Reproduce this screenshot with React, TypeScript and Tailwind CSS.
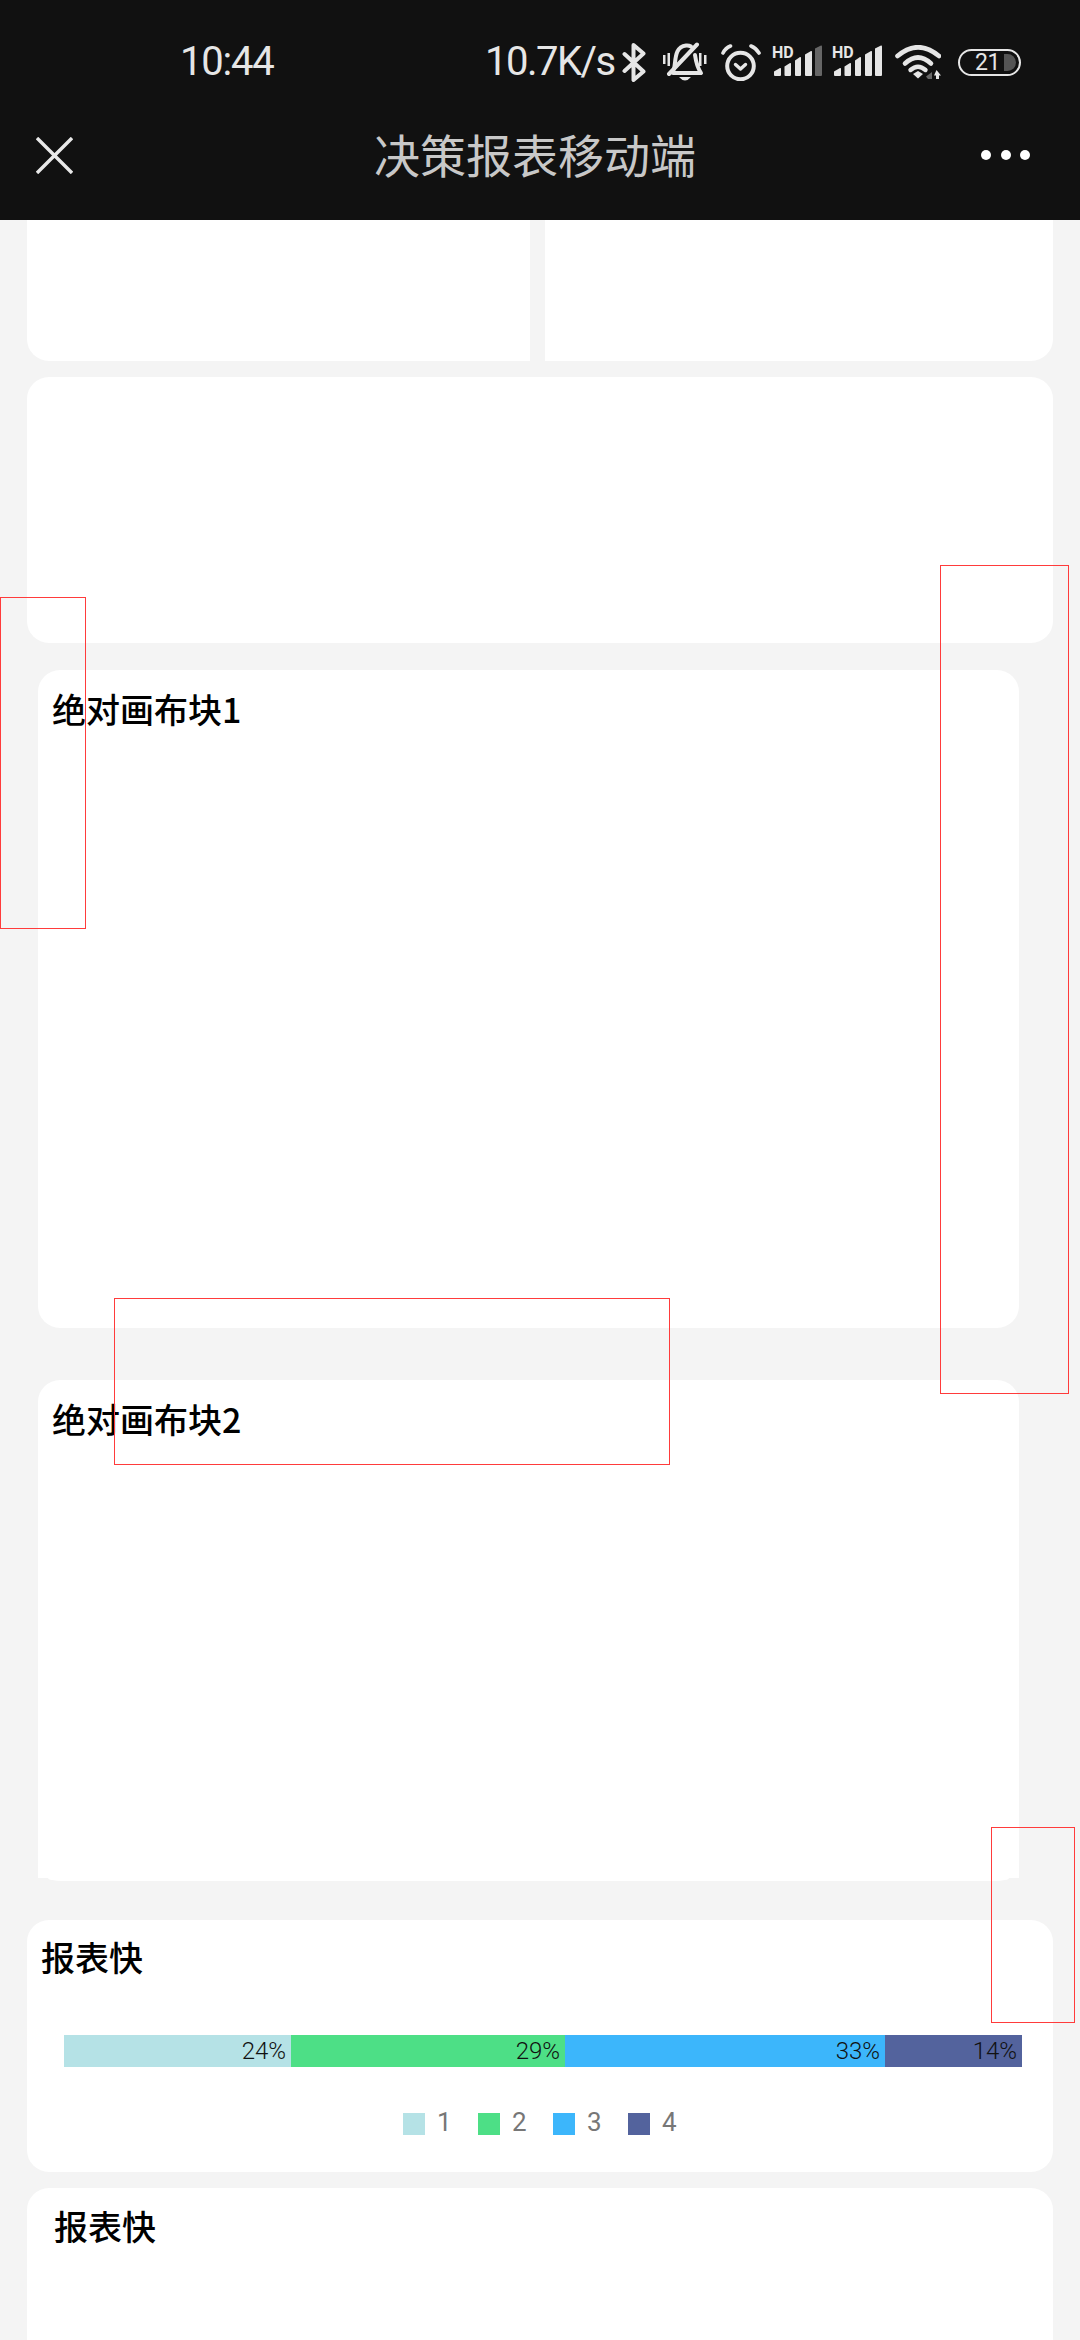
const SEGMENTS = [
  { label: '24%', cls: 'w-[227px] bg-[#b5e2e6]' },
  { label: '29%', cls: 'w-[274px] bg-[#4ddf86]' },
  { label: '33%', cls: 'w-[320px] bg-[#3cb6fb]' },
  { label: '14%', cls: 'w-[137px] bg-[#53639d]' },
];

const LEGEND = [
  { label: '1', cls: 'bg-[#b5e2e6]' },
  { label: '2', cls: 'bg-[#4ddf86]' },
  { label: '3', cls: 'bg-[#3cb6fb]' },
  { label: '4', cls: 'bg-[#53639d]' },
];

function Bluetooth() {
  return (
    <svg width="24" height="39" viewBox="0 0 24 39" fill="none" stroke="#e6e6e6" strokeWidth="4" strokeLinejoin="round" strokeLinecap="round">
      <path d="M2.5 11 L21.5 28.5 L11.5 37 V2 L21.5 10.5 L2.5 28" />
    </svg>
  );
}

function BellMuted() {
  return (
    <svg width="46" height="40" viewBox="0 0 46 40" fill="#e6e6e6" stroke="none">
      <rect x="1" y="13" width="2.5" height="9" />
      <rect x="5.5" y="11" width="2.5" height="13" />
      <rect x="37" y="11" width="2.5" height="13" />
      <rect x="42" y="13" width="2.5" height="9" />
      <g fill="none" stroke="#e6e6e6" strokeWidth="4" strokeLinecap="round" strokeLinejoin="round">
        <path d="M12 27 C14 19 12 5 24 3.5 C26 3.3 27.5 3.6 29 4.5" />
        <path d="M33 13 C34 20 35 25 39 31 H11" />
        <path d="M7 32 L35 2.5" />
      </g>
      <path d="M17 35 H29 Q26 38.5 23 38.5 Q20 38.5 17 35 Z" />
    </svg>
  );
}

function Alarm() {
  return (
    <svg width="40" height="37" viewBox="0 0 40 37" fill="none" stroke="#e6e6e6" strokeLinecap="round" strokeLinejoin="round">
      <circle cx="19.5" cy="22" r="13.3" strokeWidth="4" />
      <path d="M14.5 20.5 L19.5 25 L24.5 20.5" strokeWidth="3.4" />
      <path d="M2 9 Q4.5 4 9.5 2" strokeWidth="3.6" />
      <path d="M30 2 Q35 4 38 9" strokeWidth="3.6" />
    </svg>
  );
}

function Signal({ weak }: { weak?: boolean }) {
  return (
    <svg width="50" height="36" viewBox="0 0 50 36">
      <text x="0" y="14" fontFamily="Roboto, sans-serif" fontWeight="700" fontSize="16" fill="#e6e6e6">HD</text>
      <g fill="#e6e6e6">
        <path d="M2 27.5 L8 24 Q9 23.6 9 25 V31 Q9 32 8 32 H3 Q2 32 2 31 Z" />
        <path d="M12.5 22.5 L18 19 Q19 18.6 19 20 V31 Q19 32 18 32 H13.5 Q12.5 32 12.5 31 Z" />
        <path d="M23 16.5 L28 13 Q29 12.6 29 14 V31 Q29 32 28 32 H24 Q23 32 23 31 Z" />
        <path d="M33 10.5 L39 7 Q40 6.6 40 8 V31 Q40 32 39 32 H34 Q33 32 33 31 Z" />
        <path fill={weak ? '#666666' : '#e6e6e6'} d="M43 4.5 L49 1.5 Q50 1.2 50 2.5 V31 Q50 32 49 32 H44 Q43 32 43 31 Z" />
      </g>
    </svg>
  );
}

function Wifi() {
  return (
    <svg width="46" height="35" viewBox="0 0 46 35" fill="none">
      <g stroke="#e6e6e6" strokeWidth="4.6" strokeLinecap="round">
        <path d="M2.5 11 Q23 -6.5 44 11" />
        <path d="M10 18.5 Q23 6.5 36 18.5" />
      </g>
      <path d="M15.5 25 Q23 18.5 30.5 25" stroke="#e6e6e6" strokeWidth="4.4" strokeLinecap="round" />
      <path d="M18 29 L23 26 L28 29 L23 33.5 Z" fill="#e6e6e6" />
      <path d="M37 27 V34 H33 L31 31.5 Z" fill="#666666" />
      <path d="M41.5 25 L46 30.5 H44 V34 H41 V30.5 H39 Z" fill="#e6e6e6" />
    </svg>
  );
}

function Battery() {
  return (
    <div className="flex items-center w-[63px] h-[27px] rounded-full border-[2.5px] border-[#e6e6e6]">
      <span className="ml-[15px] w-[24px] text-[23px] leading-none text-[#e6e6e6] tracking-[-0.5px]">21</span>
      <div className="ml-[5px] w-[12px] h-[17px] bg-[#555555] rounded-r-full" />
    </div>
  );
}

function CardTitle({ children }: { children: React.ReactNode }) {
  return <div className="text-[34px] leading-none font-medium text-black">{children}</div>;
}

export default function App() {
  return (
    <div className="relative w-[1080px] h-[2340px] overflow-hidden flex flex-col bg-[#f4f4f4] font-['Noto_Sans_CJK_SC',sans-serif]">
      {/* Barra de estado + navegación */}
      <div className="h-[220px] shrink-0 bg-[#111111]">
        <div className="flex items-center h-[124px] pl-[180px] font-['Roboto',sans-serif] text-[#e6e6e6]">
          <span className="w-[305px] text-[40px] leading-none tracking-[-1.2px]">10:44</span>
          <span className="w-[137px] text-[40px] leading-none tracking-[-1.5px]">10.7K/s</span>
          <Bluetooth />
          <div className="ml-[16px]"><BellMuted /></div>
          <div className="ml-[13px]"><Alarm /></div>
          <div className="ml-[11px]"><Signal weak /></div>
          <div className="ml-[10px]"><Signal /></div>
          <div className="ml-[13px]"><Wifi /></div>
          <div className="ml-[17px]"><Battery /></div>
        </div>
        <div className="flex items-center h-[62px] pl-[36px]">
          <svg width="37" height="37" viewBox="0 0 37 37" fill="none" stroke="#e8e8e8" strokeWidth="3.4">
            <path d="M1 1 L36 36 M36 1 L1 36" />
          </svg>
          <span className="ml-[301px] mb-[5px] w-[322px] text-[46px] leading-none text-[#c8c8c8]">决策报表移动端</span>
          <div className="ml-[285px] flex gap-[9.5px]">
            <div className="w-[10px] h-[10px] rounded-full bg-white" />
            <div className="w-[10px] h-[10px] rounded-full bg-white" />
            <div className="w-[10px] h-[10px] rounded-full bg-white" />
          </div>
        </div>
      </div>

      <div className="flex-1 flex flex-col pl-[27px]">
        <div className="flex gap-[15px] h-[141px] shrink-0">
          <div className="w-[503px] bg-white rounded-bl-[22px]" />
          <div className="w-[508px] bg-white rounded-br-[22px]" />
        </div>
        <div className="mt-[16px] w-[1026px] h-[266px] shrink-0 bg-white rounded-[22px]" />

        {/* Bloques de lienzo absoluto */}
        <div className="mt-[27px] ml-[11px] w-[981px] h-[658px] shrink-0 bg-white rounded-[22px] pt-[22px] pl-[14px]">
          <CardTitle>绝对画布块1</CardTitle>
        </div>
        <div className="mt-[52px] ml-[11px] w-[981px] shrink-0 flex flex-col">
          <div className="h-[498px] bg-white rounded-t-[22px] pt-[22px] pl-[14px]">
            <CardTitle>绝对画布块2</CardTitle>
          </div>
          <div className="mx-[10px] h-[3px] bg-white rounded-b-[14px_3px]" />
        </div>

        {/* Reportes */}
        <div className="mt-[39px] w-[1026px] h-[252px] shrink-0 bg-white rounded-[22px] pt-[20px] pl-[14px]">
          <CardTitle>报表快</CardTitle>
          <div className="flex mt-[61px] ml-[23px] h-[32px]">
            {SEGMENTS.map(s => (
              <div key={s.label} className={`${s.cls} flex items-center justify-end pr-[5px] text-[24px] font-['Roboto',sans-serif] font-light text-[#111111]`}>
                {s.label}
              </div>
            ))}
          </div>
          <div className="flex mt-[42px] ml-[362px]">
            {LEGEND.map(l => (
              <div key={l.label} className="flex items-center w-[75px]">
                <div className={`w-[22px] h-[22px] ${l.cls}`} />
                <span className="ml-[12px] mb-[4px] text-[26px] leading-none font-['Roboto',sans-serif] text-[#777777]">{l.label}</span>
              </div>
            ))}
          </div>
        </div>
        <div className="mt-[16px] w-[1026px] flex-1 bg-white rounded-t-[22px] pt-[21px] pl-[27px]">
          <CardTitle>报表快</CardTitle>
        </div>
      </div>

      {/* Rectángulos rojos marcados sobre la captura */}
      <div className="absolute left-[0px] top-[597px] w-[86px] h-[332px] border-[1.5px] border-[#ff3b3b]" />
      <div className="absolute left-[940px] top-[565px] w-[129px] h-[829px] border-[1.5px] border-[#ff3b3b]" />
      <div className="absolute left-[114px] top-[1298px] w-[556px] h-[167px] border-[1.5px] border-[#ff3b3b]" />
      <div className="absolute left-[991px] top-[1827px] w-[84px] h-[196px] border-[1.5px] border-[#ff3b3b]" />
    </div>
  );
}
